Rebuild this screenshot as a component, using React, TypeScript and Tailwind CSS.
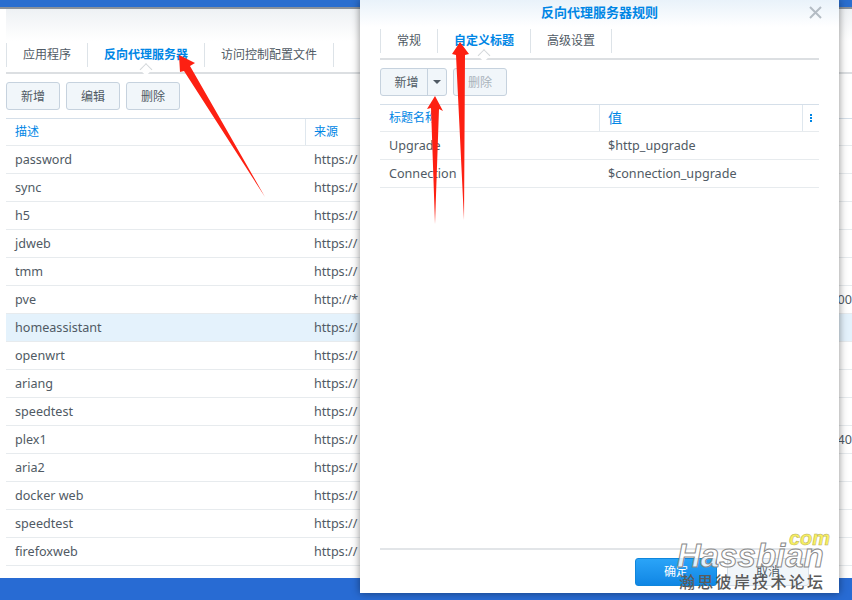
const FONT = "font-['Noto_Sans','Noto_Sans_CJK_SC',sans-serif]";

const rows = [
  { name: "password", src: "https://" },
  { name: "sync", src: "https://" },
  { name: "h5", src: "https://" },
  { name: "jdweb", src: "https://" },
  { name: "tmm", src: "https://" },
  { name: "pve", src: "http://*", tail: "00" },
  { name: "homeassistant", src: "https://", active: true },
  { name: "openwrt", src: "https://" },
  { name: "ariang", src: "https://" },
  { name: "speedtest", src: "https://" },
  { name: "plex1", src: "https://", tail: "40" },
  { name: "aria2", src: "https://" },
  { name: "docker web", src: "https://" },
  { name: "speedtest", src: "https://" },
  { name: "firefoxweb", src: "https://" },
];

function Btn({ children, disabled = false }: { children: string; disabled?: boolean }) {
  return (
    <button
      className={`h-7 w-[54px] rounded-[3px] border border-[#c6d2de] bg-[#f1f6fa] pt-[1px] text-xs ${
        disabled ? "text-[#a9b2ba]" : "text-[#505a64]"
      }`}
    >
      {children}
    </button>
  );
}

function Tab({ label, active = false, w }: { label: string; active?: boolean; w: string }) {
  return (
    <div className={`relative flex h-6 items-center justify-center border-r border-[#dde3e8] text-xs ${w}`}>
      <span className={active ? "font-bold text-[#0086e5]" : "text-[#505a64]"}>{label}</span>
      {active && (
        <span className="absolute bottom-[-7px] left-1/2 h-[9px] w-[9px] -translate-x-1/2 rotate-45 border-l border-t border-[#d3d7da] bg-white" />
      )}
    </div>
  );
}

function Arrows() {
  return (
    <svg className="absolute inset-0 z-20" width="852" height="600">
      <polygon points="179,55 195,63 190,66 265,197 184,71 180,72" fill="#fd2012" />
      <polygon points="460,42 469,54 465,55 464,220 456,55 452,54" fill="#fd2012" />
      <polygon points="435,96 443,111 439,109 435,224 431,108 427,109" fill="#fd2012" />
    </svg>
  );
}

function Dialog() {
  return (
    <div className="absolute left-[360px] top-0 z-10 flex h-[593px] w-[479px] flex-col bg-white shadow-[0_0_8px_rgba(0,0,0,0.45)]">
      <div className="relative h-[27px] shrink-0 bg-gradient-to-b from-[#e9f2fa] to-white">
        <p className="pt-[3px] text-center text-[13px] font-bold leading-[18px] text-[#0086e5]">反向代理服务器规则</p>
        <svg className="absolute left-[449px] top-[6px]" width="13" height="13" viewBox="0 0 13 13">
          <path d="M1 1 L12 12 M12 1 L1 12" stroke="#b4bcc4" strokeWidth="2" />
        </svg>
      </div>
      <div className="mx-5 flex h-[33px] shrink-0 border-b-2 border-[#dcdfe2] pt-[2px]">
        <div className="h-6 border-l border-[#dde3e8]" />
        <Tab label="常规" w="w-[57px]" />
        <Tab label="自定义标题" active w="w-[93px]" />
        <Tab label="高级设置" w="w-[81px]" />
      </div>
      <div className="mx-5 mt-2 flex h-7 shrink-0 gap-[6px]">
        <div className="flex h-7 w-[67px] rounded-[3px] border border-[#c6d2de] bg-[#f1f6fa]">
          <span className="flex w-[47px] items-center justify-center border-r border-[#c6d2de] pl-[5px] pt-[1px] text-xs text-[#505a64]">新增</span>
          <span className="flex flex-1 items-center justify-center">
            <span className="border-x-[4px] border-t-[4px] border-x-transparent border-t-[#505a64]" />
          </span>
        </div>
        <Btn disabled>删除</Btn>
      </div>
      <div className="mx-5 mt-2 border-t border-[#d5dfe9]">
        <div className="grid h-[27px] grid-cols-[220px_203px_1fr] border-b border-[#e7ebee] text-xs leading-[26px] text-[#0086e5]">
          <div className="border-r border-[#dfe7ee] pl-[9px]">标题名称</div>
          <div className="border-r border-[#dfe7ee] pl-2 text-[14px]">值</div>
          <div className="flex flex-col items-center justify-center gap-[1px]">
            <span className="h-[2px] w-[2px] bg-[#0086e5]" />
            <span className="h-[2px] w-[2px] bg-[#0086e5]" />
            <span className="h-[2px] w-[2px] bg-[#0086e5]" />
          </div>
        </div>
        {[
          ["Upgrade", "$http_upgrade"],
          ["Connection", "$connection_upgrade"],
        ].map(([k, v]) => (
          <div key={k} className="grid h-7 grid-cols-[219px_1fr] items-center border-b border-[#e7ebee] pt-[1px] text-[12.6px] text-[#505a64]">
            <span className="pl-[9px]">{k}</span>
            <span className="pl-[9px]">{v}</span>
          </div>
        ))}
      </div>
      <div className="flex-1" />
      <div className="mx-5 flex h-[45px] shrink-0 justify-end gap-[10px] border-t-2 border-[#e2e5e8] pr-[10px] pt-2">
        <button className="h-7 w-[82px] rounded-[3px] border border-[#0f86dc] bg-gradient-to-b from-[#2aa4f8] to-[#0f86e4] text-xs text-white">确定</button>
        <button className="h-7 w-[82px] rounded-[3px] border border-[#d5dfe9] bg-[#f1f6fa] text-xs text-[#505a64]">取消</button>
      </div>
    </div>
  );
}

function Watermark() {
  return (
    <div className="absolute left-[676px] top-[528px] z-30 h-[66px] w-[160px]">
      <span className="absolute right-[6px] top-[0px] font-['Liberation_Sans',sans-serif] text-[20px] font-bold italic leading-[20px] text-[#f8f060] [-webkit-text-stroke:0.5px_#b8b060]">
        com
      </span>
      <span className="absolute left-[1px] top-[8px] font-['Liberation_Sans',sans-serif] text-[33px] font-bold italic leading-[40px] text-white/85 [-webkit-text-stroke:1px_#8a8a8a]">
        Hassbian
      </span>
      <span className="absolute left-[3px] top-[43px] whitespace-nowrap text-[16px] font-medium leading-[22px] tracking-[2.3px] text-[#5a5a5a]">
        瀚思彼岸技术论坛
      </span>
    </div>
  );
}

export default function App() {
  return (
    <div className={`relative flex h-[600px] w-[852px] flex-col overflow-hidden bg-[#286bd3] ${FONT}`}>
      <div className="h-[7px] shrink-0 bg-[#2a6ecf]" />
      <div className="h-[571px] shrink-0 border-t-2 border-[#8b929a] bg-white pl-[6px]">
        <div className="h-[32px] bg-gradient-to-b from-[#eef1f4] to-white" />
        <div className="flex h-[33px] border-b-2 border-[#dcdfe2] pt-[2px]">
          <div className="h-6 border-l border-[#dde3e8]" />
          <Tab label="应用程序" w="w-[81px]" />
          <Tab label="反向代理服务器" active w="w-[117px]" />
          <Tab label="访问控制配置文件" w="w-[129px]" />
        </div>
        <div className="mt-2 flex gap-[6px]">
          <Btn>新增</Btn>
          <Btn>编辑</Btn>
          <Btn>删除</Btn>
        </div>
        <div className="mt-2 border-t border-[#d5dfe9]">
          <div className="grid h-[27px] grid-cols-[300px_1fr] border-b border-[#e7ebee] text-xs leading-[26px] text-[#0086e5]">
            <div className="border-r border-[#dfe7ee] pl-[9px]">描述</div>
            <div className="pl-2">来源</div>
          </div>
          {rows.map((r, i) => (
            <div
              key={i}
              className={`grid h-7 grid-cols-[299px_1fr_auto] items-center border-b border-[#e7ebee] pt-[1px] text-[12.6px] text-[#505a64] ${
                r.active ? "bg-[#e4f2fc]" : ""
              }`}
            >
              <span className="pl-[9px]">{r.name}</span>
              <span className="pl-[9px]">{r.src}</span>
              <span>{r.tail}</span>
            </div>
          ))}
        </div>
      </div>
      <Dialog />
      <Arrows />
      <Watermark />
    </div>
  );
}
